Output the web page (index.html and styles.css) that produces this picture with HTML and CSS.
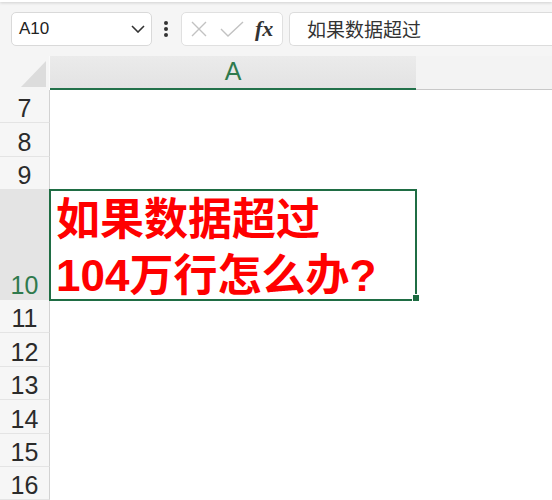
FILE: index.html
```html
<!DOCTYPE html>
<html lang="zh">
<head>
<meta charset="utf-8">
<link rel="stylesheet" href="styles.css">
</head>
<body>
<div class="topstrip"></div>
<div class="fbar">
  <div class="namebox">
    <span class="nb-text">A10</span>
    <svg class="chev" width="14" height="8" viewBox="0 0 14 8"><path d="M1 1 L7 7 L13 1" fill="none" stroke="#333" stroke-width="1.6"/></svg>
  </div>
  <div class="dots"><i></i><i></i><i></i></div>
  <div class="btns">
    <svg class="ic" width="18" height="18" viewBox="0 0 18 18"><path d="M2 2 L16 16 M16 2 L2 16" stroke="#c2c2c2" stroke-width="1.4" fill="none"/></svg>
    <svg class="ic" width="24" height="18" viewBox="0 0 24 18"><path d="M1 9 L8 16 L23 2" stroke="#c2c2c2" stroke-width="1.4" fill="none"/></svg>
    <span class="fx">fx</span>
  </div>
  <div class="finput">如果数据超过</div>
</div>
<div class="sheet">
  <div class="corner"><svg width="49" height="33" viewBox="0 0 49 33"><path d="M21 31 L46 31 L46 5 Z" fill="#dcdcdc"/></svg></div>
  <div class="colhead sel">A</div>
  <div class="colhead rest"></div>

  <div class="rh">7</div><div class="c"></div><div class="c"></div>
  <div class="rh">8</div><div class="c"></div><div class="c"></div>
  <div class="rh">9</div><div class="c"></div><div class="c"></div>
  <div class="rh rh-sel">10</div>
  <div class="c active"><div class="ctext">如果数据超过<br>104万行怎么办?</div><span class="handle"></span></div>
  <div class="c"></div>
  <div class="rh">11</div><div class="c"></div><div class="c"></div>
  <div class="rh">12</div><div class="c"></div><div class="c"></div>
  <div class="rh">13</div><div class="c"></div><div class="c"></div>
  <div class="rh">14</div><div class="c"></div><div class="c"></div>
  <div class="rh">15</div><div class="c"></div><div class="c"></div>
  <div class="rh">16</div><div class="c"></div><div class="c"></div>
</div>
</body>
</html>
```
FILE: styles.css
```css
html, body {
  margin: 0;
  padding: 0;
}
body {
  width: 552px;
  height: 500px;
  overflow: hidden;
  background: #f5f5f5;
  font-family: "Liberation Sans", "Noto Sans CJK SC", sans-serif;
}
.topstrip {
  height: 2px;
  background: #ffffff;
  box-shadow: 0 1px 3px rgba(0,0,0,0.18);
}
.fbar {
  display: flex;
  align-items: center;
  height: 34px;
  margin-top: 10px;
  padding-left: 11px;
}
.namebox {
  box-sizing: border-box;
  width: 141px;
  height: 34px;
  background: #fff;
  border: 1px solid #d9d9d9;
  border-radius: 5px;
  display: flex;
  align-items: center;
  justify-content: space-between;
  padding: 0 6px 0 7px;
}
.nb-text {
  font-size: 17px;
  color: #222;
}
.chev {
  display: block;
}
.dots {
  width: 5px;
  margin-left: 12px;
  display: flex;
  flex-direction: column;
  gap: 2px;
}
.dots i {
  display: block;
  width: 4px;
  height: 4px;
  border-radius: 2px;
  background: #333;
}
.btns {
  box-sizing: border-box;
  margin-left: 12px;
  width: 102px;
  height: 34px;
  background: #fff;
  border: 1px solid #e0e0e0;
  border-radius: 5px;
  display: flex;
  align-items: center;
  padding-left: 8px;
  gap: 12px;
}
.ic {
  display: block;
}
.fx {
  font-family: "Liberation Serif", serif;
  font-style: italic;
  font-weight: 700;
  font-size: 22px;
  color: #333;
  margin-left: -1px;
}
.finput {
  box-sizing: border-box;
  margin-left: 6px;
  flex: 1;
  height: 34px;
  background: #fff;
  border: 1px solid #dcdcdc;
  border-right: none;
  border-radius: 5px 0 0 5px;
  padding-left: 17px;
  font-family: "Noto Sans CJK SC", sans-serif;
  font-size: 19px;
  line-height: 32px;
  color: #333;
}
.sheet {
  margin-top: 10px;
  display: grid;
  grid-template-columns: 50px 366px 1fr;
  grid-template-rows: 34px 33px 34px 33px 110px 33px 34px 33px 34px 33px 33px;
  background: #fff;
}
.corner {
  background: #f5f5f5;
  border-right: 1px solid #fafafa;
  box-sizing: border-box;
}
.corner svg {
  display: block;
}
.colhead {
  box-sizing: border-box;
}
.colhead.sel {
  background: linear-gradient(#ebebeb, #e3e3e3);
  border-bottom: 2px solid #22714a;
  color: #2f7a4d;
  font-size: 25px;
  text-align: center;
  line-height: 31px;
}
.colhead.rest {
  background: #f3f3f3;
  border-bottom: 1px solid #c8c8c8;
  margin-bottom: 0;
}
.rh {
  box-sizing: border-box;
  background: #f6f6f6;
  border-right: 1px solid #d2d2d2;
  border-bottom: 1px solid #e4e4e4;
  display: flex;
  align-items: flex-end;
  justify-content: center;
  font-size: 25px;
  line-height: 25px;
  color: #2b2b2b;
  padding-bottom: 1px;
}
.rh-sel {
  background: #e4e4e4;
  color: #2f7a4d;
}
.c {
  background: #fff;
}
.c.active {
  position: relative;
  outline: 2px solid #1f6d44;
  outline-offset: -1px;
  z-index: 1;
  display: flex;
  align-items: flex-end;
}
.ctext {
  padding: 0 0 0 6px;
  margin-bottom: -4px;
  font-family: "Liberation Sans", "Noto Sans CJK SC", sans-serif;
  font-weight: 700;
  font-size: 44px;
  line-height: 56px;
  color: #ff0000;
  white-space: nowrap;
}
.handle {
  position: absolute;
  right: -4px;
  bottom: -2px;
  width: 6px;
  height: 6px;
  background: #1d6b41;
  border: 1px solid #fff;
}
```
